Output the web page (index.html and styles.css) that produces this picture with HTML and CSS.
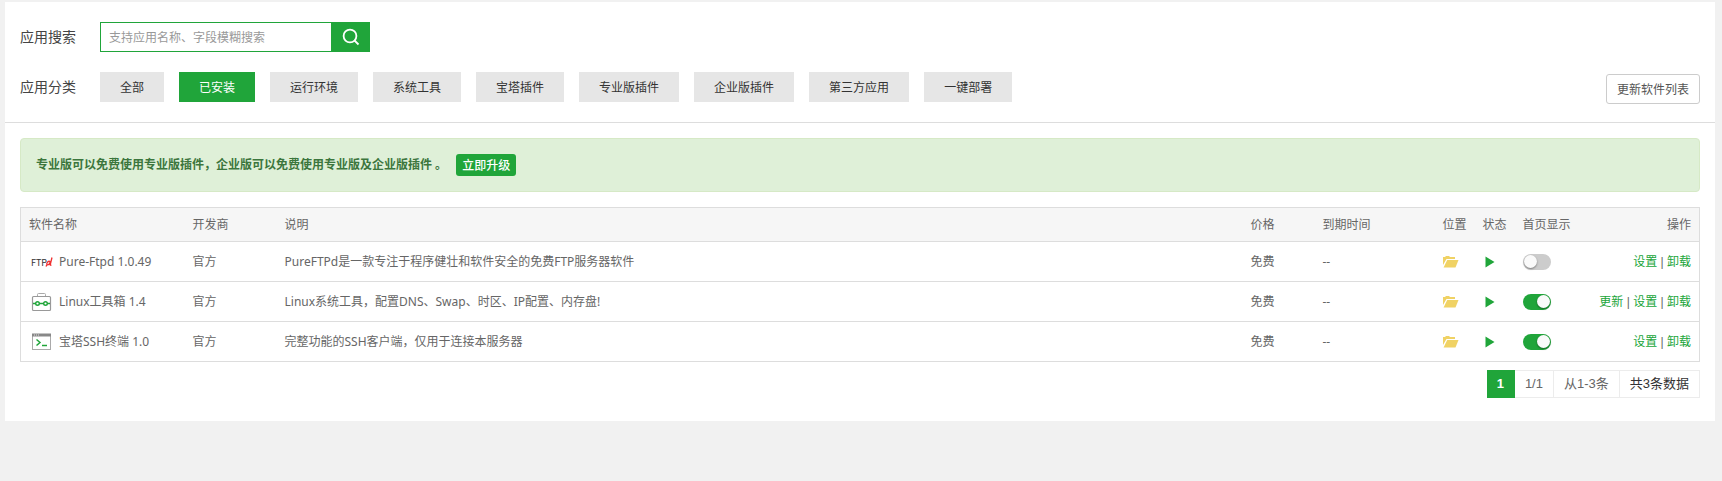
FILE: index.html
```html
<!DOCTYPE html>
<html lang="zh-CN">
<head>
    <meta charset="UTF-8">
    <meta name="viewport" content="width=device-width, initial-scale=1.0">
    <title>软件管理</title>
    <link rel="stylesheet" href="styles.css">
</head>
<body>
    <svg class="sprite" aria-hidden="true">
        <symbol id="folder" viewBox="0 0 16 12">
            <path d="M0 9V1h2l1-1h3l1 1h5v2H3.500L0 9z"/>
            <path d="M4.200 4H15.500L12.500 11.500H0.600z"/>
        </symbol>
        <symbol id="play" viewBox="0 0 10 12">
            <path d="M0.500 0.500L9.500 6L0.500 11.500z"/>
        </symbol>
    </svg>

    <main class="panel">
        <div class="toolbar">
            <div class="filters">
                <form class="filter-row">
                    <label class="filter-title" for="search">应用搜索</label>
                    <div class="search">
                        <input type="text" id="search" class="search-input" placeholder="支持应用名称、字段模糊搜索">
                        <button type="button" class="search-button" aria-label="搜索">
                            <svg width="18" height="18" viewBox="0 0 18 18" fill="none" stroke="#fff" stroke-width="1.800">
                                <circle cx="8" cy="8" r="6.400"/>
                                <path d="M12.500 12.500L16.500 16.500"/>
                            </svg>
                        </button>
                    </div>
                </form>
                <div class="filter-row">
                    <span class="filter-title">应用分类</span>
                    <div class="types">
                        <button class="type">全部</button>
                        <button class="type active">已安装</button>
                        <button class="type">运行环境</button>
                        <button class="type">系统工具</button>
                        <button class="type">宝塔插件</button>
                        <button class="type">专业版插件</button>
                        <button class="type">企业版插件</button>
                        <button class="type">第三方应用</button>
                        <button class="type">一键部署</button>
                    </div>
                </div>
            </div>
            <button class="update-button">更新软件列表</button>
        </div>

        <div class="content">
            <div class="alert">
                <span>专业版可以免费使用专业版插件，企业版可以免费使用专业版及企业版插件 。</span>
                <button class="upgrade-button">立即升级</button>
            </div>

            <table class="soft-table">
                <thead>
                    <tr>
                        <th class="col-name">软件名称</th>
                        <th class="col-author">开发商</th>
                        <th>说明</th>
                        <th class="col-price">价格</th>
                        <th class="col-time">到期时间</th>
                        <th class="col-icon">位置</th>
                        <th class="col-icon">状态</th>
                        <th class="col-show">首页显示</th>
                        <th class="col-action">操作</th>
                    </tr>
                </thead>
                <tbody>
                    <tr>
                        <td>
                            <a href="#" class="soft-name">
                                <svg width="24" height="20" viewBox="0 0 24 20">
                                    <text class="ftp-text" x="2" y="14">FTP</text>
                                    <path d="M23 5.500L21 13.500M21.300 9.500C19 8.500 17.300 11 18 12.800C19.500 13.300 20.800 12 21.300 9.500M18 12.500L17 14.500M21 13.500L22.500 13" fill="none" stroke="#f03030" stroke-width="1.300"/>
                                </svg>
                                <span>Pure-Ftpd 1.0.49</span>
                            </a>
                        </td>
                        <td>官方</td>
                        <td>PureFTPd是一款专注于程序健壮和软件安全的免费FTP服务器软件</td>
                        <td>免费</td>
                        <td>--</td>
                        <td><button class="icon-button folder" aria-label="打开目录"><svg width="16" height="12"><use href="#folder"/></svg></button></td>
                        <td><button class="icon-button play" aria-label="运行中"><svg width="10" height="12"><use href="#play"/></svg></button></td>
                        <td><input type="checkbox" class="switch" aria-label="首页显示 Pure-Ftpd"></td>
                        <td class="action"><a href="#">设置</a> | <a href="#">卸载</a></td>
                    </tr>
                    <tr>
                        <td>
                            <a href="#" class="soft-name">
                                <svg width="24" height="20" viewBox="0 0 24 20" fill="none">
                                    <path d="M8.500 5V2.500Q8.500 1.500 9.500 1.500H15.500Q16.500 1.500 16.500 2.500V5" stroke="#aaa"/>
                                    <rect x="3.500" y="4.500" width="18" height="14" rx="1" stroke="#999" stroke-width="1.200"/>
                                    <path d="M4 11.500H7M10 11.500H15M18 11.500H21" stroke="#20a53a" stroke-width="1.500"/>
                                    <circle cx="8.500" cy="11.500" r="1.800" stroke="#20a53a" stroke-width="1.400"/>
                                    <circle cx="16.500" cy="11.500" r="1.800" stroke="#20a53a" stroke-width="1.400"/>
                                </svg>
                                <span>Linux工具箱 1.4</span>
                            </a>
                        </td>
                        <td>官方</td>
                        <td>Linux系统工具，配置DNS、Swap、时区、IP配置、内存盘!</td>
                        <td>免费</td>
                        <td>--</td>
                        <td><button class="icon-button folder" aria-label="打开目录"><svg width="16" height="12"><use href="#folder"/></svg></button></td>
                        <td><button class="icon-button play" aria-label="运行中"><svg width="10" height="12"><use href="#play"/></svg></button></td>
                        <td><input type="checkbox" class="switch" aria-label="首页显示 Linux工具箱" checked></td>
                        <td class="action"><a href="#">更新</a> | <a href="#">设置</a> | <a href="#">卸载</a></td>
                    </tr>
                    <tr>
                        <td>
                            <a href="#" class="soft-name">
                                <svg width="24" height="20" viewBox="0 0 24 20" fill="none">
                                    <rect x="3.500" y="2.500" width="18" height="15" stroke="#aaa"/>
                                    <path d="M3 3H22" stroke="#888" stroke-width="3"/>
                                    <path d="M5 3H11" stroke="#ddd" stroke-dasharray="1 1"/>
                                    <path d="M7.500 7.500L11 10.500L7.500 13.500" stroke="#20a53a" stroke-width="1.500"/>
                                    <path d="M13 13.500H18" stroke="#20a53a" stroke-width="1.500"/>
                                </svg>
                                <span>宝塔SSH终端 1.0</span>
                            </a>
                        </td>
                        <td>官方</td>
                        <td>完整功能的SSH客户端，仅用于连接本服务器</td>
                        <td>免费</td>
                        <td>--</td>
                        <td><button class="icon-button folder" aria-label="打开目录"><svg width="16" height="12"><use href="#folder"/></svg></button></td>
                        <td><button class="icon-button play" aria-label="运行中"><svg width="10" height="12"><use href="#play"/></svg></button></td>
                        <td><input type="checkbox" class="switch" aria-label="首页显示 宝塔SSH终端" checked></td>
                        <td class="action"><a href="#">设置</a> | <a href="#">卸载</a></td>
                    </tr>
                </tbody>
            </table>

            <div class="page">
                <span class="page-item current">1</span>
                <span class="page-item">1/1</span>
                <span class="page-item">从1-3条</span>
                <span class="page-item total">共3条数据</span>
            </div>
        </div>
    </main>
</body>
</html>
```

FILE: styles.css
```css
* {
    box-sizing: border-box;
}
body {
    margin: 0;
    padding: 2px 7px 0 5px;
    background-color: #f1f1f1;
    color: #666;
    font-family: "Noto Sans", "Noto Sans CJK SC", sans-serif;
    font-size: 12px;
    line-height: 18px;
}
button, input {
    font-family: inherit;
    font-size: 12px;
    margin: 0;
}
button {
    border: none;
    padding: 0;
    cursor: pointer;
}
a {
    color: #20a53a;
    text-decoration: none;
}
svg {
    display: block;
}
.sprite {
    width: 0;
    height: 0;
    position: absolute;
}
.panel {
    background-color: #fff;
    padding-bottom: 23px;
}

/* 搜索和分类 */
.toolbar {
    display: flex;
    justify-content: space-between;
    align-items: flex-end;
    padding: 20px 15px 18px;
    border-bottom: 1px solid #ddd;
}
.filters {
    display: flex;
    flex-direction: column;
    gap: 20px;
    padding-bottom: 2px;
}
.filter-row {
    display: flex;
    align-items: center;
    height: 30px;
}
.filter-title {
    width: 80px;
    color: #444;
    font-size: 14px;
}
.search {
    display: flex;
    height: 30px;
}
.search-input {
    width: 231px;
    padding: 0 8px;
    border: 1px solid #20a53a;
    border-right: none;
    outline: none;
    color: #555;
}
.search-input::placeholder {
    color: #999;
}
.search-button {
    display: flex;
    align-items: center;
    justify-content: center;
    width: 39px;
    background-color: #20a53a;
}
.types {
    display: flex;
    gap: 15px;
}
.type {
    height: 30px;
    padding: 0 20px;
    background-color: #e6e6e6;
    color: #333;
}
.type.active {
    background-color: #20a53a;
    color: #fff;
}
.update-button {
    height: 30px;
    padding: 0 10px;
    background-color: #fff;
    border: 1px solid #ccc;
    border-radius: 3px;
    color: #555;
}

.content {
    padding: 15px 15px 0;
}
.alert {
    display: flex;
    align-items: center;
    gap: 9px;
    height: 54px;
    padding: 0 15px;
    margin-bottom: 15px;
    background-color: #dff0d8;
    border: 1px solid #d6e9c6;
    border-radius: 4px;
    color: #3c763d;
    font-weight: bold;
}
.upgrade-button {
    height: 22px;
    padding: 0 6px;
    background-color: #20a53a;
    border-radius: 3px;
    color: #fff;
    font-weight: 500;
}

/* 软件列表 */
.soft-table {
    width: 100%;
    table-layout: fixed;
    border-collapse: collapse;
    border: 1px solid #ddd;
}
.soft-table th {
    height: 34px;
    padding: 0 8px;
    background-color: #f6f6f6;
    font-weight: normal;
    text-align: left;
}
.soft-table td {
    height: 40px;
    padding: 0 8px;
    border-top: 1px solid #ddd;
}
.col-name {
    width: 164px;
}
.col-author {
    width: 92px;
}
.col-price {
    width: 72px;
}
.col-time {
    width: 120px;
}
.col-icon {
    width: 40px;
    white-space: nowrap;
}
.col-show {
    width: 70px;
}
.col-action {
    width: 115px;
}
.soft-table .col-action, .soft-table .action {
    text-align: right;
    white-space: nowrap;
}
.soft-table .action {
    font-family: "Liberation Sans", "Noto Sans CJK SC", sans-serif;
    padding-left: 0;
}
.soft-name {
    display: flex;
    align-items: center;
    gap: 6px;
    color: #666;
}
.ftp-text {
    fill: #333;
    font-family: "Noto Sans CJK SC", sans-serif;
    font-size: 9px;
}
.icon-button {
    display: block;
    background: none;
}
.folder {
    fill: #f0d264;
}
.play {
    fill: #20a53a;
    margin-left: 2px;
}
.switch {
    appearance: none;
    display: flex;
    align-items: center;
    width: 28px;
    height: 16px;
    padding: 1px;
    background-color: #ccc;
    border-radius: 8px;
    cursor: pointer;
}
.switch::before {
    content: "";
    width: 13px;
    height: 13px;
    background-color: #fafafa;
    border-radius: 50%;
    box-shadow: 0 1px 2px rgba(0, 0, 0, 0.4);
}
.switch:checked {
    justify-content: flex-end;
    background-color: #20a53a;
}

/* 分页 */
.page {
    display: flex;
    justify-content: flex-end;
    margin-top: 8px;
    font-family: "Liberation Sans", "Noto Sans CJK SC", sans-serif;
    font-size: 13px;
}
.page-item {
    height: 28px;
    padding: 0 10px;
    border: 1px solid #ececec;
    border-left: none;
    line-height: 26px;
}
.page-item.current {
    background-color: #20a53a;
    border-color: #20a53a;
    color: #fff;
    font-weight: bold;
}
.page-item.total {
    color: #333;
}
```
